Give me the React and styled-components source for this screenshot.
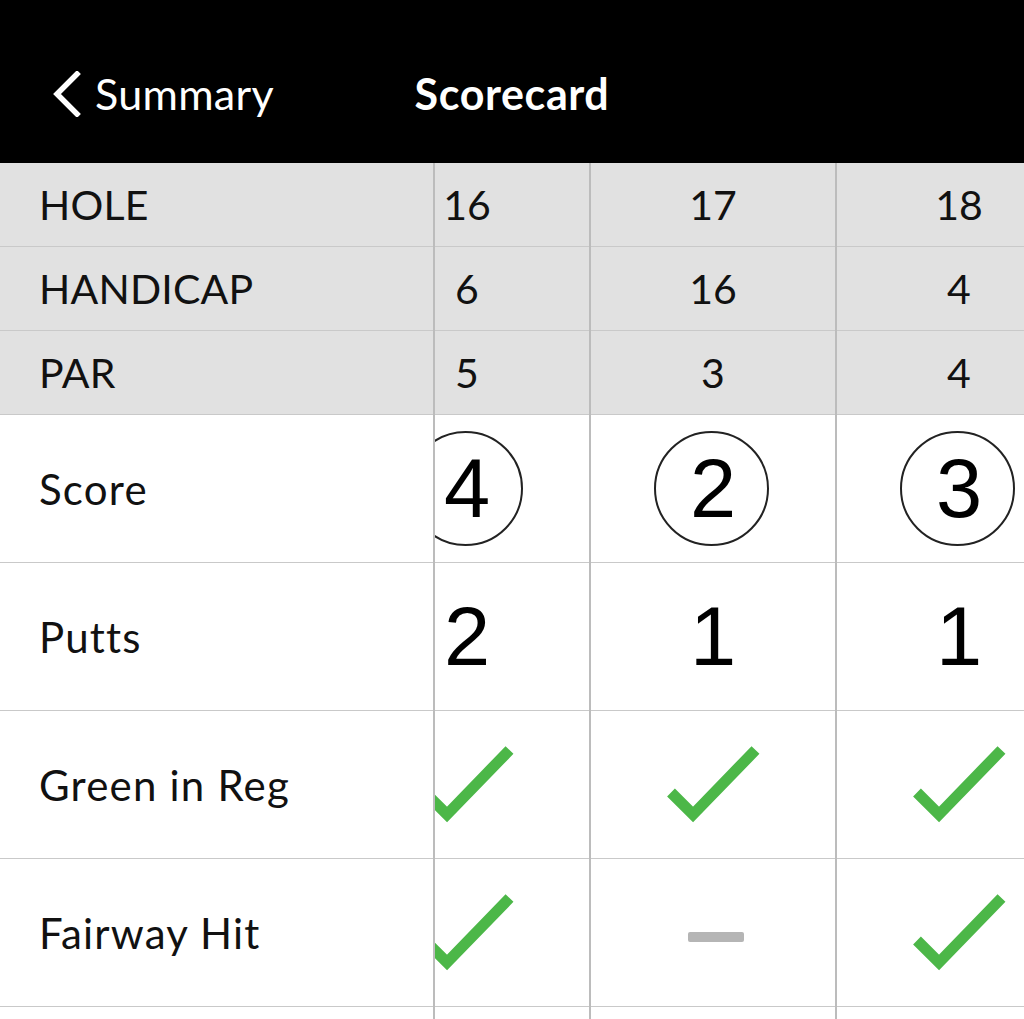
import React from "react";
import styled, { createGlobalStyle } from "styled-components";

const GlobalStyle = createGlobalStyle`
  html, body { margin: 0; padding: 0; background: #ffffff; }
  body { font-family: "Lato", "Noto Sans", sans-serif; color: #111; }
`;

const Screen = styled.div`
  width: 1024px;
  height: 1019px;
  overflow: hidden;
  background: #fff;
`;

const NavBar = styled.header`
  height: 163px;
  box-sizing: border-box;
  padding-top: 24px;
  background: #000;
  display: grid;
  grid-template-columns: 1fr auto 1fr;
  align-items: center;
  color: #fff;
`;

const BackButton = styled.div`
  display: flex;
  align-items: center;
  gap: 13px;
  padding-left: 52px;
  font-family: "Lato", sans-serif;
  font-size: 43px;
  font-weight: 400;
  letter-spacing: 0.3px;
`;

const Title = styled.h1`
  margin: 0;
  font-family: "Lato", sans-serif;
  font-size: 43px;
  font-weight: 700;
  letter-spacing: 0.6px;
`;

const Body = styled.div`
  display: flex;
  align-items: flex-start;
`;

const LabelColumn = styled.div`
  width: 435px;
  flex-shrink: 0;
  box-sizing: border-box;
  border-right: 2px solid #bcbcbc;
  display: flex;
  flex-direction: column;
`;

const Cell = styled.div`
  box-sizing: content-box;
  height: ${(p) => (p.$tall ? 147 : 83)}px;
  border-bottom: 1px solid #c9c9c9;
  background: ${(p) => (p.$shaded ? "#e1e1e1" : "#ffffff")};
  display: flex;
  align-items: center;
`;

const LabelCell = styled(Cell)`
  padding-left: 39px;
  font-size: ${(p) => (p.$shaded ? 41 : 42)}px;
  font-weight: 400;
  letter-spacing: ${(p) => (p.$shaded ? 0.2 : 1.2)}px;
`;

const ScrollPane = styled.div`
  flex: 1;
  overflow: hidden;
`;

const Track = styled.div`
  display: flex;
  margin-left: ${(p) => -p.$scroll}px;
`;

const HoleColumn = styled.div`
  width: 244px;
  flex-shrink: 0;
  border-right: 2px solid #bcbcbc;
  display: flex;
  flex-direction: column;
`;

const ValueCell = styled(Cell)`
  justify-content: center;
  font-size: 41px;
`;

const ScoreCircle = styled.div`
  width: 111px;
  height: 111px;
  border: 2px solid #222;
  border-radius: 50%;
  display: flex;
  align-items: center;
  justify-content: center;
  margin-left: -4px;
`;

const BigNumber = styled.span`
  font-family: "Liberation Sans", Arial, sans-serif;
  font-size: 83px;
  line-height: 1;
  color: #000;
  margin-left: ${(p) => (p.$inCircle ? 4 : 0)}px;
`;

const Dash = styled.div`
  width: 56px;
  height: 10px;
  border-radius: 2px;
  background: #b5b5b5;
  margin-top: 9px;
  margin-left: 6px;
`;

const Chevron = () => (
  <svg width="30" height="46" viewBox="0 0 30 46" aria-hidden="true">
    <polyline
      points="25,3 5,23 25,43"
      fill="none"
      stroke="#fff"
      strokeWidth="5.5"
      strokeLinecap="square"
    />
  </svg>
);

const Check = () => (
  <svg width="100" height="90" viewBox="0 0 100 90" aria-hidden="true">
    <polyline
      points="8,52.5 30,74.5 92.5,10"
      fill="none"
      stroke="#4cb748"
      strokeWidth="11"
      strokeLinecap="butt"
      strokeLinejoin="miter"
    />
  </svg>
);

const holes = [
  { hole: 16, handicap: 6, par: 5, score: 4, putts: 2, gir: true, fir: true },
  { hole: 17, handicap: 16, par: 3, score: 2, putts: 1, gir: true, fir: null },
  { hole: 18, handicap: 4, par: 4, score: 3, putts: 1, gir: true, fir: true },
];

const rows = [
  { key: "hole", label: "HOLE", shaded: true },
  { key: "handicap", label: "HANDICAP", shaded: true },
  { key: "par", label: "PAR", shaded: true },
  { key: "score", label: "Score", tall: true },
  { key: "putts", label: "Putts", tall: true },
  { key: "gir", label: "Green in Reg", tall: true },
  { key: "fir", label: "Fairway Hit", tall: true },
  { key: "next", label: "", tall: true },
];

function renderValue(key, h) {
  const v = h[key];
  if (key === "next") return null;
  if (key === "score") {
    return (
      <ScoreCircle>
        <BigNumber $inCircle>{v}</BigNumber>
      </ScoreCircle>
    );
  }
  if (key === "putts") return <BigNumber>{v}</BigNumber>;
  if (key === "gir" || key === "fir") {
    return v ? <Check /> : <Dash />;
  }
  return v;
}

export default function App() {
  return (
    <Screen>
      <GlobalStyle />
      <NavBar>
        <BackButton>
          <Chevron />
          <span>Summary</span>
        </BackButton>
        <Title>Scorecard</Title>
        <div />
      </NavBar>
      <Body>
        <LabelColumn>
          {rows.map((r) => (
            <LabelCell key={r.key} $shaded={r.shaded} $tall={r.tall}>
              {r.label}
            </LabelCell>
          ))}
        </LabelColumn>
        <ScrollPane>
          <Track $scroll={90}>
            {holes.map((h) => (
              <HoleColumn key={h.hole}>
                {rows.map((r) => (
                  <ValueCell key={r.key} $shaded={r.shaded} $tall={r.tall}>
                    {renderValue(r.key, h)}
                  </ValueCell>
                ))}
              </HoleColumn>
            ))}
          </Track>
        </ScrollPane>
      </Body>
    </Screen>
  );
}
